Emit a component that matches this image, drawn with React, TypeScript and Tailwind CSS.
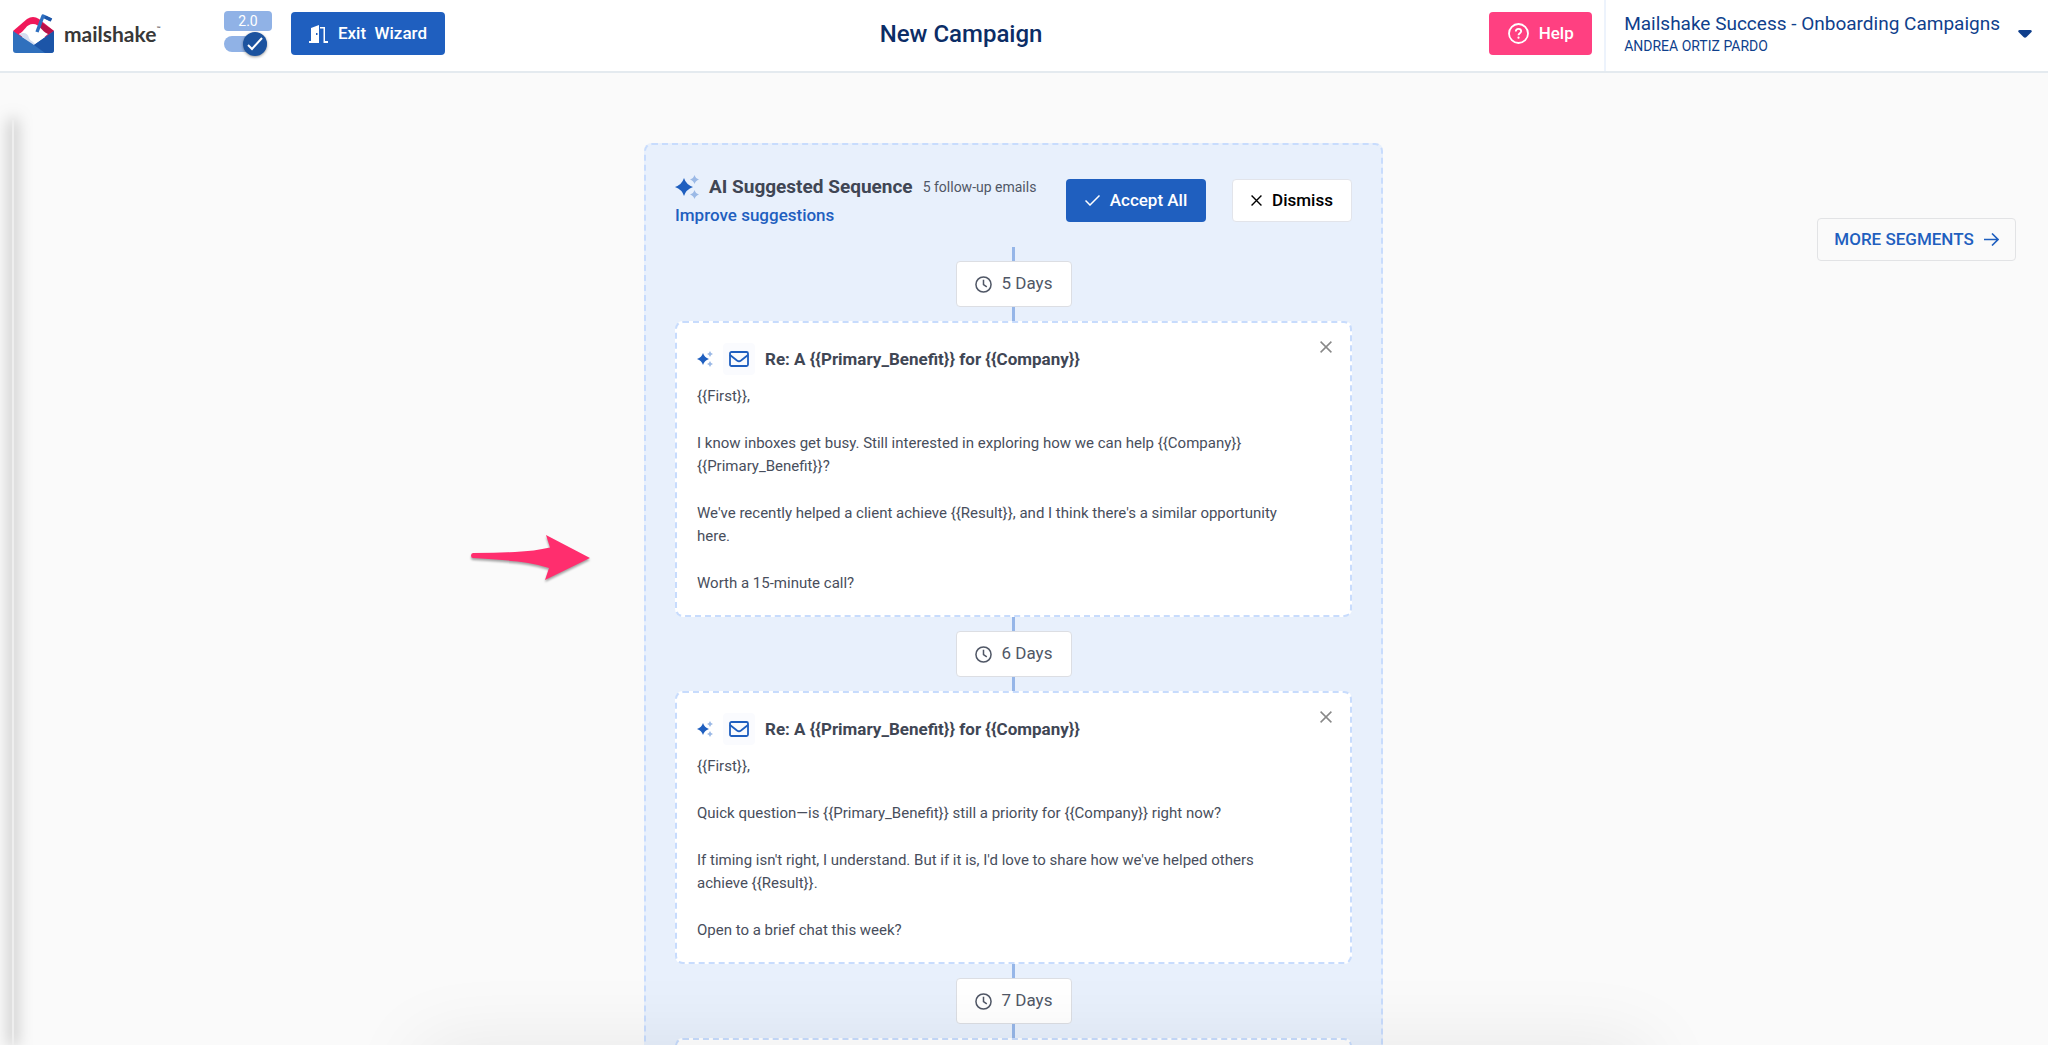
import React, { useState } from "react";

interface Email {
  id: number;
  days: number;
  subject: string;
  body: string[];
}

const subject = "Re: A {{Primary_Benefit}} for {{Company}}";

const initialEmails: Email[] = [
  {
    id: 1,
    days: 5,
    subject,
    body: [
      "{{First}},",
      "I know inboxes get busy. Still interested in exploring how we can help {{Company}} {{Primary_Benefit}}?",
      "We've recently helped a client achieve {{Result}}, and I think there's a similar opportunity here.",
      "Worth a 15-minute call?",
    ],
  },
  {
    id: 2,
    days: 6,
    subject,
    body: [
      "{{First}},",
      "Quick question—is {{Primary_Benefit}} still a priority for {{Company}} right now?",
      "If timing isn't right, I understand. But if it is, I'd love to share how we've helped others achieve {{Result}}.",
      "Open to a brief chat this week?",
    ],
  },
  { id: 3, days: 7, subject, body: [] },
];

function Logo() {
  return (
    <a href="#" aria-label="mailshake" className="flex w-[211px] items-center gap-2.5 pl-[13px]">
      <svg width="41" height="40" viewBox="0 0 41 40" className="shrink-0">
        <path d="M0 17 14 5Q20 1 26 5L41 17 36 23H5Z" fill="#f0195a" />
        <path d="M28 8 41 17 33 22 26 16Z" fill="#b8124a" />
        <path d="M6 20C12 17 13 10 20 10s8 7 15 10L21 32Z" fill="#fff" />
        <path d="M6 20c5-2 9-1 10 4 1 3 4 3 6 6l-1 2Z" fill="#d5def1" />
        <path d="M24 18 30 2l8 4" fill="none" stroke="#2e6fc0" strokeWidth="3.400" strokeLinejoin="round" />
        <path d="m32 3 6.500 3" stroke="#1c55a8" strokeWidth="3.400" />
        <path d="M0 17 21 31 41 17V36q0 3-3 3H3q-3 0-3-3Z" fill="#3070bd" />
        <path d="M21 31 41 17V36q0 3-3 3H32Z" fill="#1c55a8" />
      </svg>
      <span className="relative font-[Lato] text-[21px] leading-8 font-bold text-[#383838]">
        mailshake
        <span className="absolute top-0 -right-1 text-[5px] leading-5">™</span>
      </span>
    </a>
  );
}

function VersionToggle() {
  const [enabled, setEnabled] = useState(true);
  return (
    <label className="flex w-12 cursor-pointer flex-col gap-[5px]">
      <span className="h-5 rounded bg-[#90b2e6] text-center text-sm leading-5 text-white">2.0</span>
      <input
        type="checkbox"
        checked={enabled}
        onChange={(e) => setEnabled(e.target.checked)}
        className="sr-only"
      />
      <span
        className={`flex h-4 w-[43px] items-center rounded-full bg-[#90b2e6] ${
          enabled ? "justify-end" : "justify-start"
        }`}
      >
        <span className="flex size-6 items-center justify-center rounded-full bg-[#1c539f] shadow-[0_1px_3px_rgba(0,0,0,0.4)]">
          <svg width="16" height="16" viewBox="0 0 16 16" fill="none" stroke="#fff" strokeWidth="2">
            <path d="m1 9 4 4L15 2" />
          </svg>
        </span>
      </span>
    </label>
  );
}

function Sparkles({ size }: { size: number }) {
  return (
    <svg width={size} height={size} viewBox="0 0 24 24" className="shrink-0">
      <path d="M9 3q2 6.500 9 9-7 2.500-9 9-2-6.500-9-9 7-2.500 9-9Z" fill="#1f5fbf" />
      <path
        d="M19.500 0q1 3.500 4.500 4.500-3.500 1-4.500 4.500-1-3.500-4.500-4.500 3.500-1 4.500-4.500ZM19.500 15q1 3.500 4.500 4.500-3.500 1-4.500 4.500-1-3.500-4.500-4.500 3.500-1 4.500-4.500Z"
        fill="#9bb9e6"
      />
    </svg>
  );
}

function CloseIcon({ size }: { size: number }) {
  return (
    <svg width={size} height={size} viewBox="0 0 12 12" fill="none" stroke="currentColor" strokeWidth="1.500">
      <path d="m.6.6 10.800 10.800M11.400.6.6 11.400" />
    </svg>
  );
}

function Connector() {
  return <div className="h-[14px] w-[3px] bg-[#96b6e8]" />;
}

function DelayChip({ days }: { days: number }) {
  return (
    <div className="flex flex-col items-center">
      <Connector />
      <button className="flex h-[46px] w-[116px] items-center justify-center gap-2.5 rounded border border-[#dcdee3] bg-white text-[17px] text-[#505766]">
        <svg width="17" height="17" viewBox="0 0 18 18" fill="none" stroke="currentColor" strokeWidth="1.600">
          <circle cx="9" cy="9" r="8" />
          <path d="M9 4v5l3.500 2.500" />
        </svg>
        {days} Days
      </button>
      <Connector />
    </div>
  );
}

function EmailCard({ email, onRemove }: { email: Email; onRemove: () => void }) {
  return (
    <article className="relative rounded-lg border-2 border-dashed border-[#c8dcfd] bg-white py-5 pr-11 pl-5">
      <button
        aria-label="Remove email"
        onClick={onRemove}
        className="absolute top-[18px] right-[18px] text-[#888]"
      >
        <CloseIcon size={12} />
      </button>
      <div className="flex items-center">
        <Sparkles size={16} />
        <span className="mr-2.5 ml-2.5 flex size-8 items-center justify-center rounded bg-[#fafbfe]">
          <svg width="20" height="16" viewBox="0 0 20 16" fill="none" stroke="#1f5fbf" strokeWidth="1.800">
            <rect x="1" y="1" width="18" height="14" rx="1.500" />
            <path d="m1 4 7 5.500q2 1.500 4 0L19 4" />
          </svg>
        </span>
        <h3 className="text-[17px] leading-6 font-bold text-[#404654]">{email.subject}</h3>
      </div>
      <div className="mt-2.5 flex flex-col gap-6 text-[15px] leading-[23px] text-[#484e5c]">
        {email.body.map((paragraph) => (
          <p key={paragraph}>{paragraph}</p>
        ))}
      </div>
    </article>
  );
}

export default function App() {
  const [emails, setEmails] = useState(initialEmails);

  const handleRemove = (id: number) => {
    setEmails(emails.filter((email) => email.id !== id));
  };

  return (
    <div className="relative flex h-screen flex-col overflow-hidden bg-[#fafafa] font-[Roboto,sans-serif]">
      {/* Top bar */}
      <header className="flex h-[73px] shrink-0 border-b-2 border-[#e4eaef] bg-white">
        <div className="flex items-start">
          <div className="pt-[14px]">
            <Logo />
          </div>
          <div className="ml-[13px] pt-[11px]">
            <VersionToggle />
          </div>
          <button className="mt-3 ml-[19px] flex h-[43px] w-[154px] items-center justify-center gap-2.5 rounded bg-[#1f5fbf] text-[17px] font-medium text-white">
            <svg width="19" height="18" viewBox="0 0 19 18" fill="#fff">
              <path fillRule="evenodd" d="M0 16h2V3l8-3v18H0ZM7 8v2h1.500V8Z" />
              <path d="M11 2h5v14h3v2h-4.500V3.500H11Z" />
            </svg>
            <span className="whitespace-pre">Exit  Wizard</span>
          </button>
        </div>
        <h1 className="flex-1 pt-[18px] pr-3 text-center text-2xl font-medium text-[#0c2d66]">New Campaign</h1>
        <button className="mt-3 flex h-[43px] w-[103px] items-center justify-center gap-2.5 rounded bg-[#ff4081] text-[17px] font-medium text-white">
          <svg width="21" height="21" viewBox="0 0 21 21" fill="none" stroke="#fff" strokeWidth="1.800">
            <circle cx="10.500" cy="10.500" r="9.500" />
            <path d="M7.800 8.500q0-2.700 2.700-2.700t2.700 2.500c0 1.900-2.700 1.900-2.700 3.900" />
            <circle cx="10.500" cy="14.700" r=".5" strokeWidth="1.200" />
          </svg>
          Help
        </button>
        <button className="ml-3 flex items-start border-l-2 border-[#edf3fc] pr-4 pl-[18px] text-left text-[#0f3f8c]">
          <span className="flex flex-col pt-3">
            <span className="text-[19px] leading-6">Mailshake Success - Onboarding Campaigns</span>
            <span className="text-sm leading-5">ANDREA ORTIZ PARDO</span>
          </span>
          <svg width="14" height="8" viewBox="0 0 14 8" className="mt-[30px] ml-[18px]" fill="currentColor">
            <path d="M1.500 0h11q2 .5 1 2L8.500 7q-1.500 1.500-3 0L.5 2q-1-1.500 1-2Z" />
          </svg>
        </button>
      </header>

      {/* Edge of the collapsed drawer */}
      <div className="absolute top-[120px] bottom-0 left-3 w-0.5 bg-[#eee] shadow-[0_0_15px_1px_rgba(0,0,0,0.5)]" />

      <main className="grid grid-cols-[1fr_739px_1fr] items-start pt-[70px] pr-[21px]">
        <div className="flex justify-end pt-[392px] pr-[52px]">
          <svg width="122" height="48" viewBox="0 0 122 48" className="drop-shadow-[0_2px_1px_rgba(0,0,0,0.35)]">
            <path
              d="M3 18Q1 18 1 20.500T3 23Q40 25 58 28 70 30 79 33L75 45 120 23 76 0 80 12.500Q65 16 45 17 25 18 3 18Z"
              fill="#ff2e6e"
            />
          </svg>
        </div>

        <section className="rounded-lg border-2 border-dashed border-[#c8dcfd] bg-[#e8f0fc] px-[29px] pt-7">
          <div className="flex items-start">
            <div className="flex-1 pt-0.5">
              <div className="flex items-center">
                <Sparkles size={24} />
                <h2 className="ml-2.5 text-[19px] leading-6 font-bold text-[#404654]">AI Suggested Sequence</h2>
                <span className="ml-2.5 text-sm text-[#505766]">5 follow-up emails</span>
              </div>
              <a href="#" className="mt-1 block text-[17px] leading-6 font-medium text-[#1f5fbf]">
                Improve suggestions
              </a>
            </div>
            <button className="mt-1.5 flex h-[43px] w-[140px] items-center justify-center gap-2.5 rounded bg-[#1f5fbf] text-[17px] font-medium text-white">
              <svg width="15" height="11" viewBox="0 0 15 11" fill="none" stroke="#fff" strokeWidth="1.500">
                <path d="m.5 5.500 4.500 4.500L14.500.5" />
              </svg>
              Accept All
            </button>
            <button className="mt-1.5 ml-[26px] flex h-[43px] w-[120px] items-center justify-center gap-2.5 rounded border border-[#e2e4ea] bg-white text-[17px] font-medium text-black">
              <CloseIcon size={11} />
              Dismiss
            </button>
          </div>

          <div className="mt-5 flex flex-col">
            {emails.map((email) => (
              <React.Fragment key={email.id}>
                <DelayChip days={email.days} />
                <EmailCard email={email} onRemove={() => handleRemove(email.id)} />
              </React.Fragment>
            ))}
          </div>
        </section>

        <div className="flex justify-end pt-[75px] pr-[11px]">
          <button className="flex h-[43px] w-[199px] items-center justify-center gap-2.5 rounded border border-[#e2e3e5] text-[17px] font-medium text-[#1f5fbf]">
            MORE SEGMENTS
            <svg width="15" height="13" viewBox="0 0 15 13" fill="none" stroke="currentColor" strokeWidth="1.600">
              <path d="M0 6.500h14M8 .5l6 6-6 6" />
            </svg>
          </button>
        </div>
      </main>

      {/* Shadow rising from the bottom edge */}
      <div className="pointer-events-none absolute top-full right-[400px] left-[420px] h-20 shadow-[0_0_80px_rgba(0,0,0,0.08)]" />
    </div>
  );
}
